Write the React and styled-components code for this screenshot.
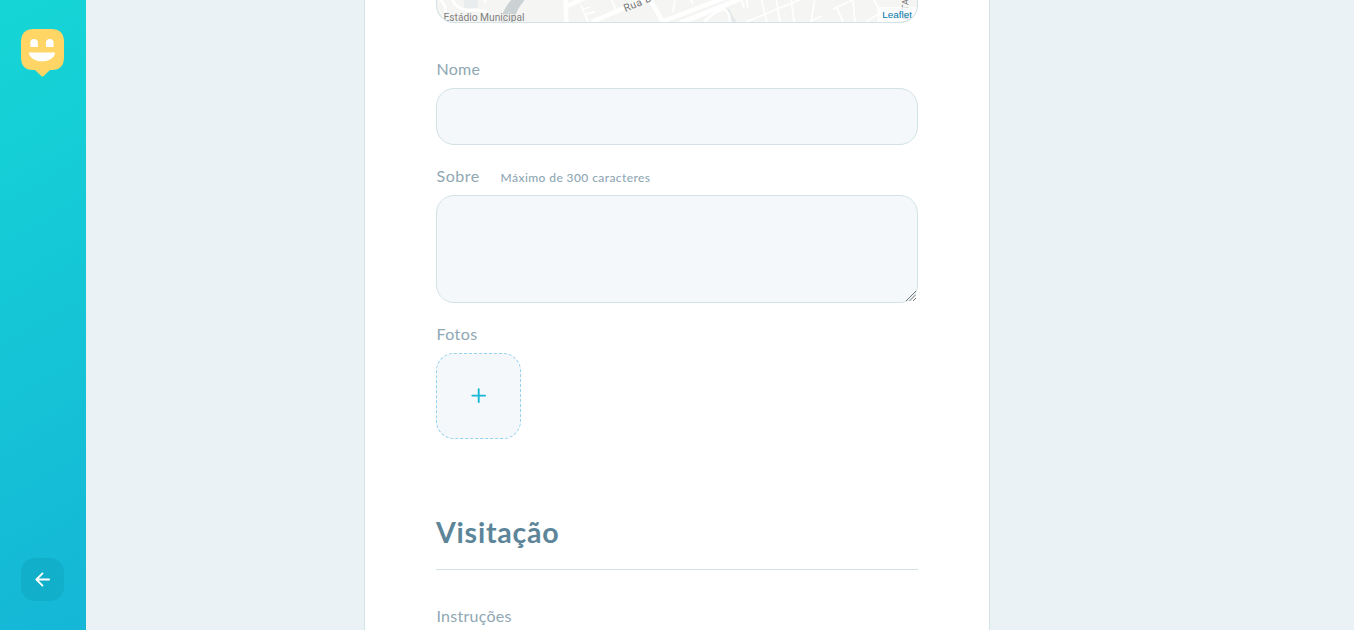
import React from "react";
import styled, { createGlobalStyle } from "styled-components";

const GlobalStyle = createGlobalStyle`
  * { box-sizing: border-box; margin: 0; padding: 0; }
  body {
    background: #ebf2f5;
    color: #8fa7b3;
    font-family: Lato, "Open Sans", sans-serif;
    overflow: hidden;
  }
`;

const Page = styled.div`
  display: grid;
  grid-template-columns: 86px 1fr 86px;
  grid-template-rows: 100vh;
  height: 100vh;
  overflow: hidden;
`;

const Sidebar = styled.aside`
  display: flex;
  flex-direction: column;
  justify-content: space-between;
  align-items: center;
  padding: 29px 1px 29px 0;
  background: linear-gradient(329.54deg, #15b6d6 0%, #15d6d6 100%);
`;

const Logo = styled.svg`
  display: block;
  width: 43px;
  height: 48px;
`;

const BackButton = styled.button`
  display: flex;
  align-items: center;
  justify-content: center;
  width: 43px;
  height: 43px;
  border: 0;
  border-radius: 14px;
  background: #12afcb;
`;

const Form = styled.form`
  width: 626px;
  height: 100%;
  margin: 0 auto;
  padding: 0 71px;
  background: #fff;
  border: solid #d3e2e5;
  border-width: 0 1px;
`;

const MapBox = styled.div`
  position: relative;
  height: 23px;
  margin-bottom: 35px;
  overflow: hidden;
  border: 1px solid #d3e2e5;
  border-top: 0;
  border-radius: 0 0 18px 18px;
  background: #f5f5f3;

  svg { display: block; }
`;

const Attribution = styled.a`
  position: absolute;
  right: 0;
  bottom: 0;
  height: 15px;
  padding: 0 5px;
  background: rgba(255, 255, 255, 0.7);
  color: #0078a8;
  font: 9.9px/15px "Liberation Sans", sans-serif;
`;

const Label = styled.label`
  display: flex;
  align-items: center;
  height: 22px;
  margin-bottom: 8px;
  padding-left: 0.5px;
  font-size: 16px;
  line-height: 22px;
  letter-spacing: ${(p) => p.$track || "0.25px"};
`;

const Hint = styled.span`
  margin-left: 21px;
  padding-top: 4px;
  font-size: 12px;
  font-weight: 500;
  letter-spacing: 0.41px;
`;

const Input = styled.input`
  display: block;
  width: 100%;
  height: 57px;
  margin-bottom: 20px;
  padding: 0 14px;
  border: 1px solid #d3e2e5;
  border-radius: 18px;
  background: #f5f8fa;
  outline: 0;
`;

const AreaWrap = styled.div`
  position: relative;
  height: 108px;
  margin-bottom: 20px;
`;

const TextArea = styled.textarea`
  display: block;
  width: 100%;
  height: 108px;
  padding: 14px;
  border: 1px solid #d3e2e5;
  border-radius: 18px;
  background: #f5f8fa;
  resize: none;
  outline: 0;
`;

const Grip = styled.svg`
  position: absolute;
  right: 2px;
  bottom: 2px;
`;

const AddPhoto = styled.button`
  display: flex;
  align-items: center;
  justify-content: center;
  width: 85px;
  height: 86px;
  border: 1px dashed #96d2f0;
  border-radius: 18px;
  background: #f5f8fa;
`;

const Legend = styled.h2`
  height: 59px;
  margin: 72px 0 35px;
  border-bottom: 1px solid #d3e2e5;
  color: #5c8599;
  font-size: 28.5px;
  font-weight: 700;
  line-height: 42px;
  letter-spacing: 0.78px;
`;

function StreetMap() {
  return (
    <svg width="480" height="22" viewBox="437 0 480 22" fill="none" stroke="#fff">
      <path d="M513 -2C505 7 501 14 501 23H515C514 14 519 7 526 -2Z" fill="#cad2d3" stroke="none" />
      <path d="M464 0H478V8H464Z" fill="#e9eded" stroke="none" />
      <path d="M438 -2C448 5 448 15 439 22M452 -2C454 6 463 12 473 10S493 16 500 22M485 -2V3" strokeWidth="2.6" />
      <path d="M565.5 -2L566.5 23M567 6L585 -2M592 22L665 -10M649 -2L663 22M661 22L727 -3" strokeWidth="4.5" />
      <path d="M581 5L588 22M584 9L590 7M586 14L595 12M611 -2L616 10M675 -2L673 12M690 -2L693 4M741 -2L744 8M746 -2L748 8" strokeWidth="1.8" />
      <path d="M680 23L745 -3" strokeWidth="5" />
      <path d="M727 9L735 23" stroke="#e4e9e9" strokeWidth="3.5" />
      <path d="M704 22L713 14L724 9Q730 12 730 22" strokeWidth="2.4" />
      <path d="M746 22L804 -2M761 -2L767 23M776 -2L780 22M791 -2L794 22M815 -2L811 22M811 21L822 16M833 9L857 -2M837 8L843 22M853 0L855 22M873 -2L880 11M880 13L866 22" strokeWidth="1.7" />
      <text x="443.5" y="20.5" fill="#808080" stroke="#f5f5f3" strokeWidth="1.5" paintOrder="stroke" fontFamily="Roboto, sans-serif" fontSize="10.3" textLength="81">Estádio Municipal</text>
      <text transform="translate(625.5 12) rotate(-23)" fill="#777" stroke="none" fontFamily="Roboto, sans-serif" fontSize="10.5" letterSpacing=".4">Rua B</text>
      <text transform="translate(908 23) rotate(-88)" fill="#777" stroke="none" fontFamily="Roboto, sans-serif" fontSize="9.5">ua TA</text>
    </svg>
  );
}

export default function App() {
  return (
    <>
      <GlobalStyle />
      <Page>
        <Sidebar>
          <Logo viewBox="0 0 43 48">
            <path d="M13 0H30Q43 0 43 13V28Q43 41 31 41H29L22.5 47.2Q21.5 48 20.5 47.2L14 41H12Q0 41 0 28V13Q0 0 13 0Z" fill="#ffd666" />
            <path d="M9.3 18V13.8a3.8 3.8 0 0 1 7.6 0V18ZM25 18V13.8a3.8 3.8 0 0 1 7.6 0V18ZM8 23.4H34C34.5 28 28 32.3 21 32.3S7.5 28 8 23.4Z" fill="#fff" />
          </Logo>
          <BackButton type="button" aria-label="Voltar">
            <svg width="21" height="21" viewBox="0 0 24 24" fill="none" stroke="#fff" strokeWidth="2.1" strokeLinecap="round" strokeLinejoin="round">
              <path d="M19.5 12H5M12 19L5 12L12 5" />
            </svg>
          </BackButton>
        </Sidebar>
        <Form>
          <MapBox>
            <StreetMap />
            <Attribution>Leaflet</Attribution>
          </MapBox>
          <Label>Nome</Label>
          <Input />
          <Label $track="0.5px">Sobre<Hint>Máximo de 300 caracteres</Hint></Label>
          <AreaWrap>
            <TextArea />
            <Grip width="10" height="10" viewBox="0 0 10 10" stroke="#707678" strokeWidth="1">
              <path d="M0 10L10 0M3.5 10L10 3.5M7 10L10 7" />
            </Grip>
          </AreaWrap>
          <Label $track="0.4px">Fotos</Label>
          <AddPhoto type="button" aria-label="Adicionar foto">
            <svg width="21" height="22" viewBox="0 0 21 22" stroke="#15b6d6" strokeWidth="1.9" strokeLinecap="round">
              <path d="M10.7 4.2V17M4.3 10.6H17.1" />
            </svg>
          </AddPhoto>
          <Legend>Visitação</Legend>
          <Label>Instruções</Label>
        </Form>
      </Page>
    </>
  );
}
